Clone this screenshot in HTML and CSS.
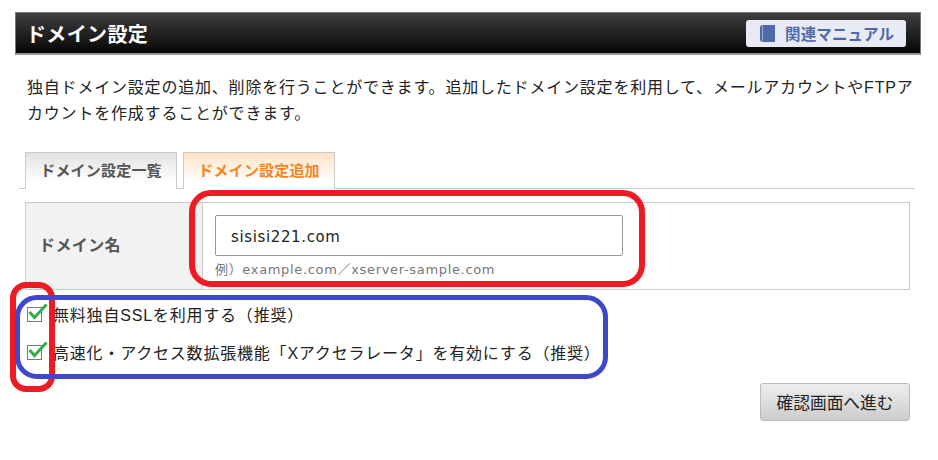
FILE: index.html
```html
<!DOCTYPE html>
<html lang="ja">
<head>
  <meta charset="UTF-8">
  <title>ドメイン設定</title>
  <link rel="stylesheet" href="styles.css">
</head>
<body>
  <div class="page">
    <div class="title-bar">
      <h1>ドメイン設定</h1>
      <a class="manual-btn">
        <svg class="book" width="15" height="17" viewBox="0 0 15 17">
          <path d="M3 0H15V17H3Q0 17 0 14V3Q0 0 3 0Z" fill="#4f69a8"/>
          <path d="M2.5 1V16" stroke="#9fb0d6" stroke-width="1"/>
        </svg>
        関連マニュアル
      </a>
    </div>

    <p class="lead">独自ドメイン設定の追加、削除を行うことができます。追加したドメイン設定を利用して、メールアカウントやFTPアカウントを作成することができます。</p>

    <div class="tabs">
      <div class="tab">ドメイン設定一覧</div>
      <div class="tab active">ドメイン設定追加</div>
    </div>

    <div class="form-table">
      <div class="form-label">ドメイン名</div>
      <div class="form-field">
        <input type="text" class="domain-input" value="sisisi221.com">
        <div class="hint">例）example.com／xserver-sample.com</div>
      </div>
    </div>

    <label class="check-row">
      <svg class="check" width="22" height="20" viewBox="0 0 22 20">
        <rect x="0.5" y="4.5" width="14" height="14" fill="#fff" stroke="#777"/>
        <path d="M2.5 9L7.5 14.5L19.5 1.5" fill="none" stroke="#2fae45" stroke-width="3"/>
      </svg>
      無料独自SSLを利用する（推奨）
    </label>
    <label class="check-row">
      <svg class="check" width="22" height="20" viewBox="0 0 22 20">
        <rect x="0.5" y="4.5" width="14" height="14" fill="#fff" stroke="#777"/>
        <path d="M2.5 9L7.5 14.5L19.5 1.5" fill="none" stroke="#2fae45" stroke-width="3"/>
      </svg>
      高速化・アクセス数拡張機能「Xアクセラレータ」を有効にする（推奨）
    </label>

    <div class="actions">
      <button class="next-btn">確認画面へ進む</button>
    </div>
  </div>

  <!-- 注釈の枠 -->
  <div class="mark mark-input"></div>
  <div class="mark mark-checks"></div>
  <div class="mark mark-options"></div>
</body>
</html>
```

FILE: styles.css
```css
html, body {
  margin: 0;
  padding: 0;
  background-color: #fff;
}
body {
  font-family: "Liberation Sans", "Noto Sans CJK JP", sans-serif;
  color: #222;
  width: 938px;
  height: 460px;
  overflow: hidden;
  position: relative;
}
.page {
  padding: 12px 17px 0 15px;
}
.title-bar {
  display: flex;
  align-items: center;
  justify-content: space-between;
  box-sizing: border-box;
  height: 43px;
  padding: 0 14px 0 10px;
  border: 1px solid #777;
  border-bottom: 2px solid #999;
  background: linear-gradient(#3e3e3e, #060606);
}
h1 {
  margin: 0;
  font-size: 20px;
  letter-spacing: 0.35px;
  font-weight: bold;
  color: #fff;
}
.manual-btn {
  display: flex;
  align-items: center;
  gap: 10px;
  box-sizing: border-box;
  width: 160px;
  height: 27px;
  padding-left: 14px;
  border-radius: 3px;
  background-color: #e8ebf6;
  color: #4f69a8;
  font-size: 15.5px;
  letter-spacing: 0.15px;
  font-weight: bold;
}
.lead {
  margin: 20px 0 0 12px;
  font-size: 16px;
  line-height: 26px;
  letter-spacing: 0.8px;
  color: #222;
}
.tabs {
  display: flex;
  gap: 6px;
  margin: 25px 6px 0 4px;
  padding-left: 6px;
  border-bottom: 1px solid #ccc;
  height: 36px;
}
.tab {
  box-sizing: border-box;
  width: 152px;
  height: 37px;
  border: 1px solid #ccc;
  border-bottom: none;
  background: linear-gradient(#e2e2e2, #fff 80%);
  color: #555;
  font-size: 15px;
  letter-spacing: 0.2px;
  font-weight: bold;
  text-align: center;
  line-height: 36px;
}
.tab.active {
  background: linear-gradient(#ffe3c4, #fff 80%);
  color: #f5861f;
}
.form-table {
  display: flex;
  box-sizing: border-box;
  height: 88px;
  margin: 13px 11px 0 10px;
  border: 1px solid #ccc;
}
.form-label {
  box-sizing: border-box;
  width: 177px;
  padding-left: 13px;
  background-color: #f2f2f2;
  border-right: 1px solid #ccc;
  color: #555;
  font-size: 16px;
  letter-spacing: 0.4px;
  font-weight: bold;
  line-height: 86px;
}
.form-field {
  padding: 12px 0 0 12px;
}
.domain-input {
  display: block;
  box-sizing: border-box;
  width: 408px;
  height: 41px;
  padding: 2px 15px 0;
  border: 1px solid #999;
  border-radius: 2px;
  font-family: "DejaVu Sans", "Noto Sans CJK JP", sans-serif;
  font-size: 15px;
  letter-spacing: 0.63px;
  color: #222;
}
.hint {
  margin-top: 3px;
  font-family: "DejaVu Sans", "Noto Sans CJK JP", sans-serif;
  font-size: 13px;
  letter-spacing: 0.67px;
  color: #777;
}
.check-row {
  display: flex;
  align-items: center;
  height: 38px;
  padding-left: 12px;
  font-size: 16px;
  letter-spacing: 0.8px;
  color: #222;
}
.form-table + .check-row {
  margin-top: 5px;
}
.check {
  margin: -2px 4px 0 0;
  flex-shrink: 0;
}
.actions {
  display: flex;
  justify-content: flex-end;
  margin: 12px 11px 0 0;
}
.next-btn {
  box-sizing: border-box;
  width: 150px;
  height: 38px;
  border: 1px solid #bbb;
  border-radius: 3px;
  background: linear-gradient(#eee, #ccc);
  font-family: "Liberation Sans", "Noto Sans CJK JP", sans-serif;
  font-size: 16.7px;
  color: #222;
}
/* 注釈 */
.mark {
  position: absolute;
  box-sizing: border-box;
  border-style: solid;
  border-width: 6px;
  pointer-events: none;
}
.mark-input {
  left: 189px;
  top: 190px;
  width: 456px;
  height: 97px;
  border-color: #ed1c24;
  border-radius: 22px;
}
.mark-checks {
  left: 10px;
  top: 282px;
  width: 45px;
  height: 110px;
  border-color: #ed1c24;
  border-radius: 16px;
}
.mark-options {
  left: 15px;
  top: 295px;
  width: 593px;
  height: 84px;
  border-color: #3f48cc;
  border-radius: 22px;
  border-width: 5px;
}
```
